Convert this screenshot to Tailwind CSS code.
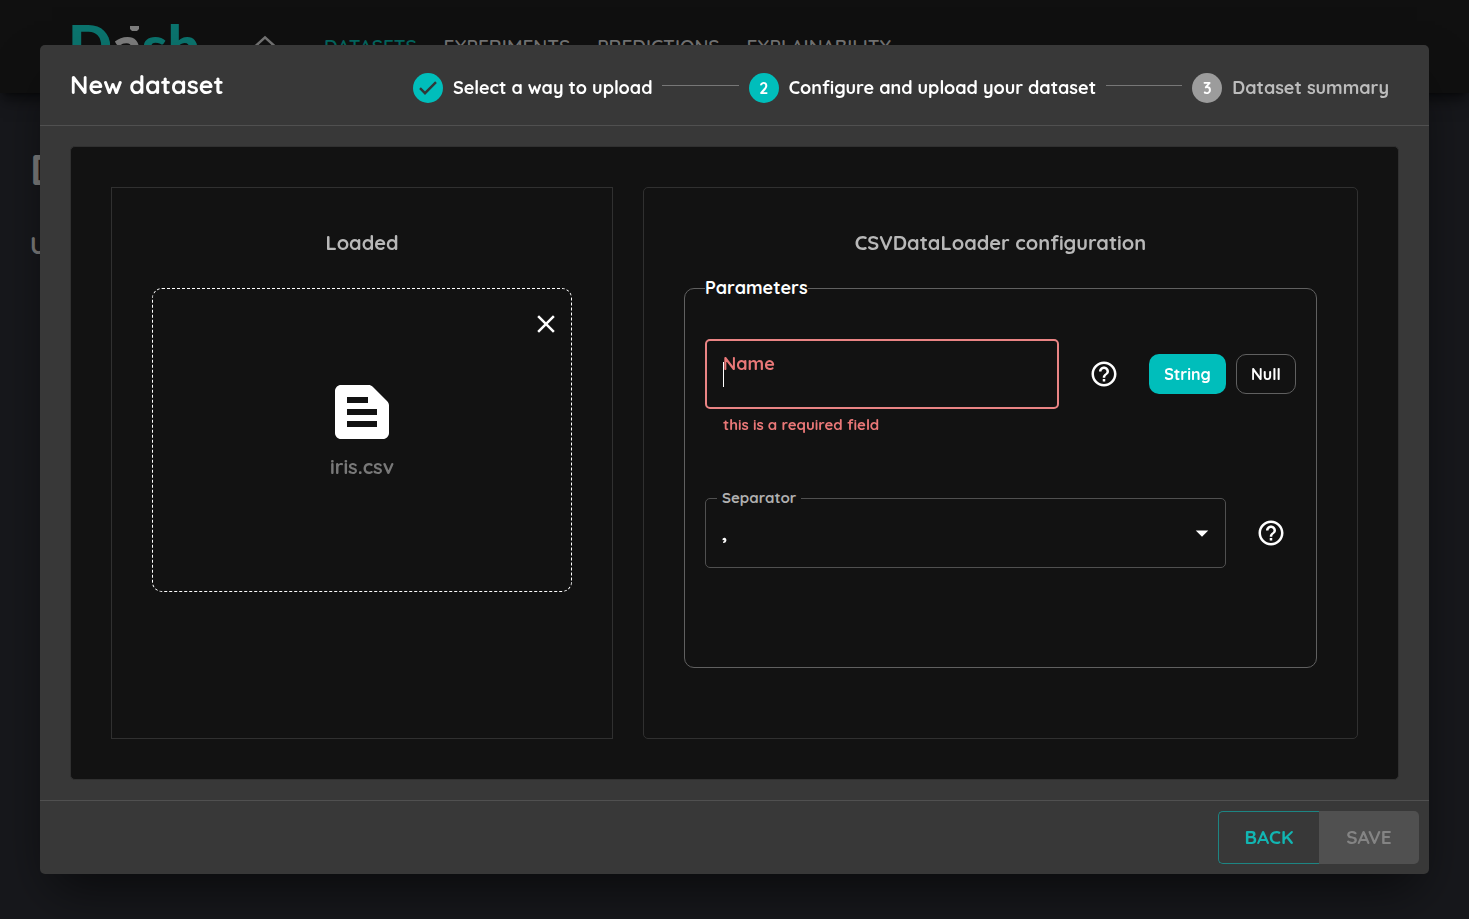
<!DOCTYPE html>
<html lang="en">
<head>
<meta charset="utf-8">
<meta name="viewport" content="width=device-width, initial-scale=1">
<title>New dataset</title>
<script src="https://cdn.jsdelivr.net/npm/@tailwindcss/browser@4"></script>
</head>
<body class="min-h-screen overflow-hidden bg-[#17181c] font-['Quicksand','Lato',sans-serif] text-white">
<div class="h-screen overflow-hidden" aria-hidden="true">
  <header class="flex h-[93px] items-center bg-[#101010] pl-[68px] text-[19px] font-semibold text-[#747474] shadow-lg shadow-black/50">
    <div class="relative h-[42px] w-[130px]">
      <div class="flex items-start font-['Lato',sans-serif] text-[58px] leading-[38px] font-black text-[#0b746e]"><span>D</span><span class="text-[#7d7d7d]">a</span><span>sh</span></div>
      <svg class="absolute top-0 left-[62px] h-2 w-[9px]" viewBox="0 0 9 8" fill="#7d7d7d"><path d="M0 0h9v3l-2 2H2L0 3z"/></svg>
    </div>
    <svg class="ml-[52px] size-[30px]" viewBox="0 0 24 24" fill="currentColor"><path d="M12 5.69l5 4.5V18h-2v-6H9v6H7v-7.81l5-4.5M12 3L2 12h3v8h6v-6h2v6h6v-8h3L12 3z"/></svg>
    <nav class="ml-[44px] flex gap-[27px]">
      <a href="#" class="text-[#04665f]">DATASETS</a><a href="#">EXPERIMENTS</a><a href="#">PREDICTIONS</a><a href="#">EXPLAINABILITY</a>
    </nav>
  </header>
  <main class="px-[30px] pt-[52px] font-bold text-[#7d7d7d]">
    <h1 class="text-[42px] leading-[50px]">Datasets</h1>
    <p class="pt-[34px] text-2xl">Upload your datasets</p>
  </main>
</div>

<div class="fixed inset-0 flex items-center px-10">
  <div role="dialog" aria-labelledby="title" class="flex w-full flex-col rounded-[5px] bg-[#383838] shadow-2xl shadow-black/60">
    <div class="flex items-center justify-between border-b border-[#505050] py-5 pr-10 pl-[30px]">
      <h2 id="title" class="text-[25px] leading-[40px] font-bold">New dataset</h2>
      <ol class="flex w-[74%] items-center gap-[10px] pt-[6px] text-lg leading-[30px] font-bold">
        <li class="flex items-center gap-[10px]">
          <svg class="size-[30px]" viewBox="0 0 30 30"><circle cx="15" cy="15" r="15" fill="#00bebb"/><path d="M7 15.2l5 5L23 9.2" fill="none" stroke="#303838" stroke-width="2.4"/></svg>
          <span>Select a way to upload</span>
        </li>
        <li class="mb-[5px] h-px flex-1 bg-[#777]" aria-hidden="true"></li>
        <li class="flex items-center gap-[10px]">
          <span class="grid size-[30px] place-items-center rounded-full bg-[#00bebb] text-base">2</span>
          <span>Configure and upload your dataset</span>
        </li>
        <li class="mb-[5px] h-px flex-1 bg-[#777]" aria-hidden="true"></li>
        <li class="flex items-center gap-[10px] text-[#bcbcbc]">
          <span class="grid size-[30px] place-items-center rounded-full bg-[#9c9c9c] text-base text-white">3</span>
          <span>Dataset summary</span>
        </li>
      </ol>
    </div>

    <div class="px-[30px] py-5">
      <div class="grid grid-cols-[502fr_715fr] gap-[30px] rounded-[5px] border border-[#303030] bg-[#121212] p-10">
        <section class="min-h-[552px] border border-[#303030] px-10 pt-10">
          <h3 class="text-center text-xl leading-[30px] font-bold text-[#b8b8b8]">Loaded</h3>
          <div class="relative mt-[30px] flex h-[304px] flex-col items-center justify-center rounded-[10px] border border-dashed border-white pb-[22px]">
            <button type="button" aria-label="Remove file" class="absolute top-5 right-[10px] size-[30px]"><svg viewBox="0 0 24 24" fill="currentColor"><path d="M19 6.41L17.59 5 12 10.59 6.41 5 5 6.41 10.59 12 5 17.59 6.41 19 12 13.41 17.59 19 19 17.59 13.41 12z"/></svg></button>
            <svg class="size-[72px]" viewBox="0 0 24 24" fill="currentColor"><path d="M20.41 8.41l-4.83-4.83c-.37-.37-.88-.58-1.41-.58H5c-1.1 0-2 .9-2 2v14c0 1.1.9 2 2 2h14c1.1 0 2-.9 2-2V9.83c0-.53-.21-1.04-.59-1.42zM7 7h7v2H7V7zm10 10H7v-2h10v2zm0-4H7v-2h10v2z"/></svg>
            <p class="mt-1 text-xl leading-[30px] font-bold text-[#787878]">iris.csv</p>
          </div>
        </section>

        <section class="rounded-[5px] border border-[#303030] px-10 pt-10">
          <h3 class="text-center text-xl leading-[30px] font-bold text-[#b8b8b8]">CSVDataLoader configuration</h3>
          <form class="relative mt-[30px] h-[380px] rounded-[10px] border border-[#606060] px-5 pt-[50px]">
            <p class="absolute -top-[14px] left-5 bg-[#121212] text-lg leading-[26px] font-bold">Parameters</p>
            <div class="flex items-center">
              <div class="relative flex-1">
                <input id="name" type="text" aria-invalid="true" aria-describedby="name-error" class="h-[70px] w-full rounded-[5px] border-2 border-[#ea8484] px-4 text-xl caret-transparent outline-none">
                <label for="name" class="absolute top-3 left-[18px] text-lg leading-[26px] font-bold text-[#ea7878]">Name</label>
                <span class="absolute top-[23px] left-[18px] h-[25px] w-px bg-white"></span>
              </div>
              <button type="button" aria-label="Help: Name" class="mx-[30px] size-[30px]"><svg viewBox="0 0 24 24" fill="currentColor"><path d="M11 18h2v-2h-2v2zm1-16C6.48 2 2 6.48 2 12s4.48 10 10 10 10-4.48 10-10S17.52 2 12 2zm0 18c-4.41 0-8-3.59-8-8s3.59-8 8-8 8 3.59 8 8-3.59 8-8 8zm0-14c-2.21 0-4 1.79-4 4h2c0-1.1.9-2 2-2s2 .9 2 2c0 2-3 1.75-3 5h2c0-2.25 3-2.5 3-5 0-2.21-1.79-4-4-4z"/></svg></button>
              <div class="flex gap-[10px] text-base font-bold">
                <button type="button" class="h-10 w-[77px] rounded-[10px] bg-[#00bebb]">String</button>
                <button type="button" class="h-10 w-[60px] rounded-[10px] border border-[#606060]">Null</button>
              </div>
            </div>
            <p id="name-error" class="pt-[5px] pl-[18px] text-[15px] leading-[22px] font-bold text-[#ea7878]">this is a required field</p>
            <div class="flex items-center pt-[62px]">
              <div class="relative flex-1">
                <select id="sep" class="h-[70px] w-full appearance-none rounded-[5px] border border-[#505050] bg-[#121212] px-4 text-xl font-bold"><option>,</option><option>;</option></select>
                <label for="sep" class="absolute -top-[11px] left-3 bg-[#121212] px-[5px] text-[15px] leading-[22px] font-bold text-[#b0b0b0]">Separator</label>
                <svg class="pointer-events-none absolute top-5 right-[9px] size-[30px]" viewBox="0 0 24 24" fill="currentColor"><path d="M7 10l5 5 5-5z"/></svg>
              </div>
              <button type="button" aria-label="Help: Separator" class="mr-[10px] ml-[30px] size-[30px]"><svg viewBox="0 0 24 24" fill="currentColor"><path d="M11 18h2v-2h-2v2zm1-16C6.48 2 2 6.48 2 12s4.48 10 10 10 10-4.48 10-10S17.52 2 12 2zm0 18c-4.41 0-8-3.59-8-8s3.59-8 8-8 8 3.59 8 8-3.59 8-8 8zm0-14c-2.21 0-4 1.79-4 4h2c0-1.1.9-2 2-2s2 .9 2 2c0 2-3 1.75-3 5h2c0-2.25 3-2.5 3-5 0-2.21-1.79-4-4-4z"/></svg></button>
            </div>
          </form>
        </section>
      </div>
    </div>

    <div class="flex justify-end border-t border-[#505050] p-[10px] text-[19px] font-bold">
      <button type="button" class="h-[53px] w-[101px] rounded-l-[5px] border border-r-0 border-[#1d8583] text-[#12b5b2]">BACK</button>
      <button type="button" disabled class="h-[53px] w-[100px] rounded-r-[5px] bg-[#505050] text-[#848484]">SAVE</button>
    </div>
  </div>
</div>
</body>
</html>
